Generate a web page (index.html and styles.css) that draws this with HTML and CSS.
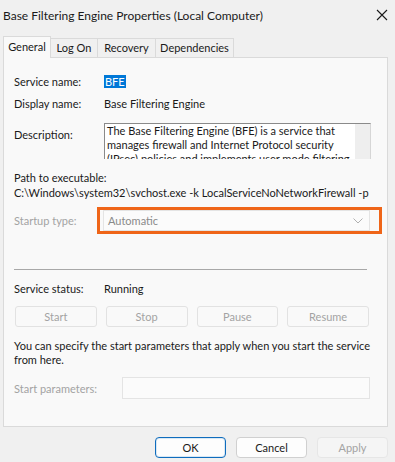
FILE: index.html
```html
<!DOCTYPE html>
<html>
<head>
<meta charset="utf-8">
<link rel="stylesheet" href="styles.css">
</head>
<body>
<div class="window">
  <div class="titlebar">
    <span class="title">Base Filtering Engine Properties (Local Computer)</span>
    <svg class="close" width="12" height="12" viewBox="0 0 12 12"><path d="M1 1 L11 11 M11 1 L1 11" stroke="#1a1a1a" stroke-width="1.1" fill="none"/></svg>
  </div>
  <div class="tabs">
    <div class="tab active">General</div>
    <div class="tab">Log On</div>
    <div class="tab">Recovery</div>
    <div class="tab">Dependencies</div>
  </div>
  <div class="panel">
    <div class="row r1"><span class="label">Service name:</span><span class="value"><span class="sel">BFE</span></span></div>
    <div class="row r2"><span class="label">Display name:</span><span class="value">Base Filtering Engine</span></div>
    <div class="desc-row">
      <span class="label desc-label">Description:</span>
      <div class="descbox">
        <div class="desc-text">The Base Filtering Engine (BFE) is a service that manages firewall and Internet Protocol security (IPsec) policies and implements user mode filtering.</div>
        <div class="scrolltrack"></div>
      </div>
    </div>
    <div class="path-label">Path to executable:</div>
    <div class="path-value">C:\Windows\system32\svchost.exe -k LocalServiceNoNetworkFirewall -p</div>
    <div class="startup-row">
      <span class="label disabled">Startup type:</span>
      <div class="highlight">
        <div class="combo">
          <span>Automatic</span>
          <svg width="10" height="6" viewBox="0 0 10 6"><path d="M0.5 0.5 L5 5 L9.5 0.5" stroke="#b0b0b0" stroke-width="1" fill="none"/></svg>
        </div>
      </div>
    </div>
    <div class="sep"></div>
    <div class="row status-row"><span class="label">Service status:</span><span class="value">Running</span></div>
    <div class="btnrow">
      <button class="btn dis">Start</button>
      <button class="btn dis">Stop</button>
      <button class="btn dis">Pause</button>
      <button class="btn dis">Resume</button>
    </div>
    <p class="note">You can specify the start parameters that apply when you start the service from here.</p>
    <div class="params-row">
      <span class="label disabled params-label">Start parameters:</span>
      <div class="params-input"></div>
    </div>
  </div>
  <div class="footer">
    <button class="fbtn ok">OK</button>
    <button class="fbtn">Cancel</button>
    <button class="fbtn dis">Apply</button>
  </div>
</div>
</body>
</html>
```
FILE: styles.css
```css
* { box-sizing: border-box; }
html, body { margin: 0; padding: 0; }
body {
  width: 395px;
  height: 462px;
  background: #f0f0f0;
  font-family: Lato, "Liberation Sans", Arial, sans-serif;
  font-size: 11px;
  color: #1a1a1a;
  overflow: hidden;
}
.window { width: 395px; height: 462px; }
.titlebar {
  height: 30px;
  display: flex;
  align-items: center;
  justify-content: space-between;
  padding: 0 7px 0 3px;
}
.title { font-size: 12px; color: #1a1a1a; }
.tabs {
  display: flex;
  height: 27px;
  margin-left: 3px;
  align-items: flex-end;
  position: relative;
  z-index: 1;
}
.tab {
  height: 19px;
  border: 1px solid #dadada;
  border-bottom: none;
  border-left: none;
  background: #f0f0f0;
  line-height: 18px;
  text-align: center;
  white-space: nowrap;
}
.tab.active {
  height: 22px;
  background: #f9f9f9;
  border-left: 1px solid #dadada;
  margin-bottom: -1px;
  line-height: 20px;
  width: 48px;
}
.tab:nth-child(2) { width: 47px; }
.tab:nth-child(3) { width: 58px; }
.tab:nth-child(4) { width: 78px; }
.panel {
  margin-left: 3px;
  width: 385px;
  height: 370px;
  background: #f9f9f9;
  border: 1px solid #dadada;
  padding: 12px 0 0 10px;
}
.row { display: flex; align-items: center; height: 22px; }
.label { width: 90px; flex: none; }
.disabled { color: #a3a3a3; }
.sel { background: #0078d7; color: #fff; padding: 0 1px; }
.desc-row { display: flex; margin-top: 9px; }
.desc-label { padding-top: 5px; line-height: 14px; }
.descbox {
  width: 267px;
  height: 36px;
  border: 1px solid #8a8a8a;
  border-right-color: #d6d6d6;
  border-bottom: none;
  background: #fff;
  display: flex;
  overflow: hidden;
}
.desc-text {
  flex: 1;
  padding: 0 2px;
  line-height: 14px;
}
.scrolltrack { width: 15px; flex: none; background: #eeeeee; }
.path-label { margin-top: 11px; line-height: 15px; }
.path-value { line-height: 15px; white-space: nowrap; }
.startup-row { display: flex; align-items: center; margin-top: 7px; }
.startup-row .label { width: 83px; }
.highlight {
  width: 285px;
  height: 27px;
  border: 3px solid #ef6518;
  padding: 0 9px 0 3px;
}
.combo {
  height: 21px;
  background: #fbfbfb;
  border: 1px solid #e4e4e4;
  display: flex;
  align-items: center;
  justify-content: space-between;
  padding: 0 6px 0 4px;
  color: #8a8a8a;
}
.sep { margin-top: 35px; width: 353px; height: 1px; background: #a8a8a8; }
.status-row { margin-top: 9px; height: 18px; }
.btnrow {
  display: grid;
  grid-template-columns: repeat(4, 1fr);
  column-gap: 9px;
  width: 354px;
  margin-top: 9px;
  margin-left: 1px;
}
.btn {
  height: 21px;
  font-family: inherit;
  font-size: 11px;
  border-radius: 3px;
  border: 1px solid #e2e2e2;
  background: #f9f9f9;
  color: #a3a3a3;
  padding: 0;
}
.note { margin: 12px 0 0 0; line-height: 14px; width: 360px; }
.params-row { display: flex; align-items: center; margin-top: 10px; }
.params-label { width: 108px; }
.params-input {
  width: 248px;
  height: 22px;
  border: 1px solid #e4e4e4;
  background: #fbfbfb;
}
.footer {
  display: flex;
  justify-content: flex-end;
  gap: 10px;
  padding: 10px 7px 0 0;
}
.fbtn {
  width: 71px;
  height: 21px;
  font-family: inherit;
  font-size: 11px;
  border-radius: 4px;
  border: 1px solid #d0d0d0;
  background: #fdfdfd;
  color: #1a1a1a;
  padding: 0;
}
.fbtn.ok { border: 1px solid #0f6cbd; box-shadow: inset 0 0 0 1px #d8e8f4; }
.fbtn.dis { color: #a3a3a3; border-color: #e6e6e6; background: #f5f5f5; }
```
